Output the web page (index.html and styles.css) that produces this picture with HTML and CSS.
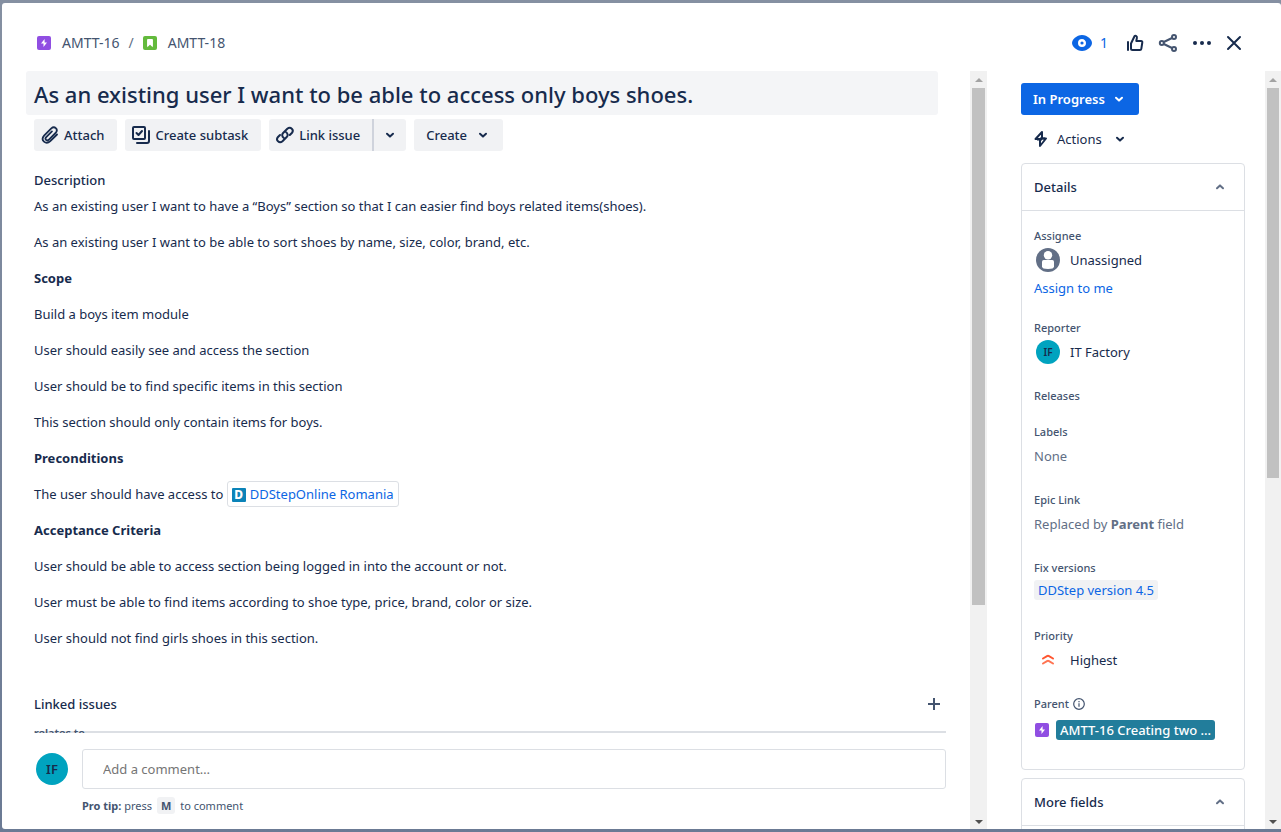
FILE: index.html
```html
<!DOCTYPE html>
<html lang="en">
<head>
<meta charset="utf-8">
<title>AMTT-18</title>
<link rel="stylesheet" href="styles.css">
</head>
<body>
<svg class="defs" aria-hidden="true">
  <symbol id="epic" viewBox="0 0 14 14"><rect width="14" height="14" rx="2" fill="#904ee2"/><path d="M7.600 3L4 7.600h2.500V11L10 6.400H7.600z" fill="#fff"/></symbol>
  <symbol id="story" viewBox="0 0 14 14"><rect width="14" height="14" rx="2" fill="#63ba3c"/><path d="M4.600 3.500h4.800v7L7 8.200l-2.400 2.300z" fill="#fff" stroke="#fff" stroke-width="1" stroke-linejoin="round"/></symbol>
  <symbol id="down" viewBox="0 0 12 12"><path d="M3 4.800L6 7.600l3-2.800" fill="none" stroke="currentColor" stroke-width="2" stroke-linecap="round" stroke-linejoin="round"/></symbol>
  <symbol id="up" viewBox="0 0 12 12"><path d="M3 7.200L6 4.400l3 2.800" fill="none" stroke="currentColor" stroke-width="2" stroke-linecap="round" stroke-linejoin="round"/></symbol>
</svg>
<div class="modal">
  <header class="top">
    <nav class="crumbs">
      <svg class="type"><use href="#epic"/></svg><a href="#epic-issue">AMTT-16</a><span class="slash">/</span><svg class="type"><use href="#story"/></svg><a href="#story-issue">AMTT-18</a>
    </nav>
    <div class="tools">
      <button class="watch" aria-label="Watchers: 1"><svg width="20" height="16" viewBox="0 0 20 16"><path d="M10 0C4.500 0 0 4.700 0 8s4.500 8 10 8 10-4.700 10-8-4.500-8-10-8z" fill="#0c66e4"/><circle cx="10" cy="8" r="2.800" fill="none" stroke="#fff" stroke-width="2.400"/></svg><span>1</span></button>
      <button aria-label="Like"><svg width="18" height="18" viewBox="0 0 18 18" fill="none" stroke="#172b4d" stroke-width="2" stroke-linejoin="round" stroke-linecap="round"><path d="M2 8v8M5 9.500L8.500 2.200Q9 1.600 10 1.900q1.200.500.900 2L10.300 7H15q1.500 0 1.300 1.500l-1 6.300Q15.100 16 14 16H6.500Q5 16 5 14.500z"/></svg></button>
      <button aria-label="Share"><svg width="20" height="20" viewBox="0 0 20 20" fill="none" stroke="#44546f" stroke-width="2"><circle cx="3.800" cy="10" r="2"/><circle cx="16" cy="4" r="2"/><circle cx="16" cy="16" r="2"/><path d="M5.800 9l8.200-4M5.800 11l8.200 4"/></svg></button>
      <button aria-label="More"><svg width="20" height="6" viewBox="0 0 20 6" fill="#172b4d"><circle cx="3" cy="3" r="2"/><circle cx="10" cy="3" r="2"/><circle cx="17" cy="3" r="2"/></svg></button>
      <button aria-label="Close"><svg width="16" height="16" viewBox="0 0 16 16" stroke="#172b4d" stroke-width="2" stroke-linecap="round"><path d="M2 2l12 12M14 2L2 14"/></svg></button>
    </div>
  </header>
  <div class="columns">
    <main class="main">
      <div class="scroll">
        <h1>As an existing user I want to be able to access only boys shoes.</h1>
        <div class="actions">
          <button class="btn"><svg width="20" height="20" viewBox="0 0 20 20" fill="none" stroke="currentColor" stroke-width="1.800" stroke-linecap="round"><path d="M17 9.500l-6.700 6.700c-4.500 4.200-10.200-1-6.200-5.600l7.200-7.200c3.200-2.800 7.300.800 4.500 4.300l-7.100 7.100c-2 1.700-4.200-.700-2.700-2.500l5.900-5.900"/></svg>Attach</button>
          <button class="btn"><svg width="20" height="20" viewBox="0 0 20 20" fill="none" stroke="currentColor" stroke-width="2" stroke-linecap="round" stroke-linejoin="round"><rect x="2" y="2" width="12" height="12" rx="1"/><path d="M5.500 8l2 2 3.500-4M18 6v10q0 2-2 2H6"/></svg>Create subtask</button>
          <div class="split"><button class="btn"><svg width="20" height="20" viewBox="0 0 20 20" fill="none" stroke="currentColor" stroke-width="2" stroke-linecap="round"><path d="M8.600 12.700c-1.700-1.300-1.800-3.400-.5-4.700l4.200-4.200c3.200-2.800 7.200 1 4.500 4.200l-2 2M11.200 7.300c1.700 1.300 1.900 3.400.5 4.700l-4.200 4.200c-3.200 2.800-7.200-1-4.500-4.200l2-2"/></svg>Link issue</button><button class="btn arrow" aria-label="More link options"><svg class="chev"><use href="#down"/></svg></button></div>
          <button class="btn wide">Create<svg class="chev"><use href="#down"/></svg></button>
        </div>
        <section class="desc">
          <h2>Description</h2>
          <p>As an existing user I want to have a “Boys” section so that I can easier find boys related items(shoes).</p>
          <p>As an existing user I want to be able to sort shoes by name, size, color, brand, etc.</p>
          <p><strong>Scope</strong></p>
          <p>Build a boys item module</p>
          <p>User should easily see and access the section</p>
          <p>User should be to find specific items in this section</p>
          <p>This section should only contain items for boys.</p>
          <p><strong>Preconditions</strong></p>
          <p>The user should have access to <a class="smart" href="#ddstep"><span class="fav">D</span>DDStepOnline Romania</a></p>
          <p><strong>Acceptance Criteria</strong></p>
          <p>User should be able to access section being logged in into the account or not.</p>
          <p>User must be able to find items according to shoe type, price, brand, color or size.</p>
          <p>User should not find girls shoes in this section.</p>
        </section>
        <section class="linked">
          <div class="linked-head"><h2>Linked issues</h2><button aria-label="Link an issue"><svg width="12" height="12" viewBox="0 0 12 12" stroke="#44546f" stroke-width="2"><path d="M6 0v12M0 6h12"/></svg></button></div>
          <h3>relates to</h3>
        </section>
      </div>
      <footer class="comment">
        <span class="avatar big">IF</span>
        <div class="comment-body">
          <input type="text" aria-label="Add a comment" placeholder="Add a comment…">
          <div class="tip"><b>Pro tip:</b> press <kbd>M</kbd> to comment</div>
        </div>
      </footer>
    </main>
    <div class="bar" aria-hidden="true"><i class="tri-up"></i><div class="track"><div class="thumb main-thumb"></div></div><i class="tri-down"></i></div>
    <aside class="side">
      <button class="status">In Progress<svg class="chev"><use href="#down"/></svg></button>
      <button class="automation"><svg width="16" height="16" viewBox="0 0 16 16" fill="none" stroke="currentColor" stroke-width="2" stroke-linejoin="round"><path d="M9 1L2.500 8H7v7l6-7.500H9z"/><path d="M4 8.500h5M7 7.500h5"/></svg><span>Actions</span><svg class="chev"><use href="#down"/></svg></button>
      <section class="card">
        <h2>Details<button aria-label="Collapse details"><svg class="chev"><use href="#up"/></svg></button></h2>
        <dl>
          <div class="field"><dt>Assignee</dt><dd><svg class="person" viewBox="0 0 24 24"><circle cx="12" cy="12" r="12" fill="#626f86"/><circle cx="12" cy="7.200" r="4.200" fill="#fff"/><path d="M6 13.700q0-1.700 1.700-1.700h8.600q1.700 0 1.700 1.700v4.800q0 2.500-6 2.500t-6-2.500z" fill="#fff"/></svg>Unassigned</dd><dd class="assign"><a href="#assign">Assign to me</a></dd></div>
          <div class="field close"><dt>Reporter</dt><dd><span class="avatar small">IF</span>IT Factory</dd></div>
          <div class="field"><dt>Releases</dt></div>
          <div class="field close"><dt>Labels</dt><dd class="muted">None</dd></div>
          <div class="field"><dt>Epic Link</dt><dd class="muted"><span>Replaced by <b>Parent</b> field</span></dd></div>
          <div class="field"><dt>Fix versions</dt><dd class="versions"><a class="version" href="#version">DDStep version 4.5</a></dd></div>
          <div class="field"><dt>Priority</dt><dd><svg class="prio" viewBox="0 0 24 24" fill="none" stroke-width="2" stroke-linecap="round" stroke-linejoin="round"><path d="M7 10.500l4-2.400q1-.600 2 0l4 2.400" stroke="#ff5630"/><path d="M7 15.500l4-2.400q1-.600 2 0l4 2.400" stroke="#ff7452"/></svg>Highest</dd></div>
          <div class="field"><dt>Parent <svg width="12" height="12" viewBox="0 0 12 12" fill="none" stroke="#44546f" stroke-width="1.200"><circle cx="6" cy="6" r="5.300"/><path d="M6 5.200v3.600M6 3v1.300"/></svg></dt><dd class="parent"><svg class="type"><use href="#epic"/></svg><a href="#parent">AMTT-16 Creating two ...</a></dd></div>
        </dl>
      </section>
      <section class="card"><h2>More fields<button aria-label="Collapse more fields"><svg class="chev"><use href="#up"/></svg></button></h2><div class="rest"></div></section>
    </aside>
    <div class="bar" aria-hidden="true"><i class="tri-up"></i><div class="track"><div class="thumb side-thumb"></div></div><i class="tri-down"></i></div>
  </div>
</div>
</body>
</html>
```
FILE: styles.css
```css
* { box-sizing: border-box; }
body {
  margin: 0;
  height: 100vh;
  padding: 3px 0 3px 2px;
  display: flex;
  background: linear-gradient(#8590a2, #6b7a94);
  font-family: "Noto Sans", "Open Sans", sans-serif;
  font-size: 13px;
  line-height: 24px;
  color: #172b4d;
}
.defs { position: absolute; width: 0; height: 0; }
h1, h2, h3, p, dl, dd { margin: 0; }
button { border: 0; padding: 0; background: none; font: inherit; color: inherit; display: flex; align-items: center; }
a { color: #0c66e4; text-decoration: none; }
svg { flex: none; }
.chev { width: 12px; height: 12px; }
.type { width: 14px; height: 14px; }
.modal { flex: 1; min-width: 0; display: flex; flex-direction: column; background: #fff; border-radius: 3px; }
.top { height: 68px; padding: 12px 39px 0 35px; display: flex; align-items: center; justify-content: space-between; font-size: 14px; }
.crumbs { display: flex; align-items: center; }
.crumbs a { color: #44546f; margin-left: 11px; }
.slash { color: #626f86; margin: 0 9px; }
.tools { display: flex; align-items: center; gap: 14px; }
.watch { color: #0c66e4; gap: 8px; margin-right: 4px; }
.columns { flex: 1; min-height: 0; display: grid; grid-template-columns: minmax(0, 1fr) 17px 278px 16px; }
.main { min-height: 0; padding: 0 24px 0 32px; display: flex; flex-direction: column; }
.scroll { position: relative; z-index: 1; flex: 1; min-height: 0; overflow: hidden; margin-left: -8px; padding-left: 8px; }
h1 { margin: 0 8px 4px -8px; padding: 7px 8px 5px; background: #f4f5f7; border-radius: 3px; font-size: 22px; line-height: 32px; font-weight: 500; }
.actions { display: flex; gap: 8px; }
.btn { height: 32px; padding: 0 13px 0 6px; gap: 4px; background: #f1f2f4; border-radius: 3px; font-weight: 500; }
.btn.wide { padding: 0 14px 0 12px; gap: 10px; }
.split { display: flex; }
.split .btn:first-child { border-radius: 3px 0 0 3px; padding-right: 12px; }
.split .arrow { border-left: 2px solid #cfd3dc; border-radius: 0 3px 3px 0; padding: 0 10px; }
h2 { font-size: 13px; line-height: 20px; font-weight: 500; }
.desc h2 { margin: 19px 0 4px; }
.desc p { margin-bottom: 12px; }
.desc strong { font-weight: 700; }
.smart { padding: 3px 4px; border: 1px solid #dcdfe4; border-radius: 3px; }
.fav { display: inline-block; vertical-align: middle; width: 14px; height: 14px; margin: -2px 4px 0 0; border-radius: 1px; background: #0b83b8; color: #fff; font-size: 12px; line-height: 14px; font-weight: 800; text-align: center; }
.linked { margin-top: 42px; }
.linked-head { display: flex; align-items: center; justify-content: space-between; height: 24px; padding-right: 6px; }
h3 { margin-top: 7px; font-size: 11px; line-height: 20px; font-weight: 600; color: #44546f; }
.comment { margin-top: -2px; padding: 16px 0 11px 2px; border-top: 2px solid #dcdfe4; display: flex; gap: 14px; }
.comment-body { flex: 1; }
.avatar { display: flex; align-items: center; justify-content: center; flex: none; border-radius: 50%; background: #00a3bf; color: #172b4d; font-weight: 600; }
.big { width: 32px; height: 32px; margin-top: 4px; }
.small { width: 24px; height: 24px; font-size: 10px; }
input { display: block; width: 100%; height: 40px; padding: 0 20px; border: 1px solid #dcdfe4; border-radius: 3px; font: inherit; }
input::placeholder { color: #757575; opacity: 1; }
.tip { margin-top: 5px; font-size: 11px; color: #44546f; }
.tip b { font-weight: 700; }
kbd { margin: 0 2px; padding: 1px 4px; border-radius: 3px; background: #f1f2f4; font: inherit; font-weight: 700; }
.bar { min-height: 0; background: #f1f1f1; padding: 7px 0 5px; display: flex; flex-direction: column; align-items: center; justify-content: space-between; }
.tri-up, .tri-down { border: 4px solid transparent; border-top: 0; border-bottom-color: #a3a3a3; }
.tri-down { border-top: 4px solid #505050; border-bottom: 0; }
.track { flex: 1; align-self: stretch; margin: 6px 2px 9px; }
.thumb { background: #c1c1c1; }
.main-thumb { height: 71.5%; }
.side-thumb { height: 54%; }
.side { min-height: 0; overflow: hidden; padding: 12px 20px 0 34px; }
.status { height: 32px; padding: 0 14px 0 12px; gap: 8px; background: #0c66e4; border-radius: 3px; color: #fff; font-weight: 600; }
.automation { height: 32px; margin: 8px 0; padding: 0 12px; gap: 8px; }
.automation .chev { margin-left: 4px; }
.card { border: 1px solid #dcdfe4; border-radius: 4px; margin-bottom: 8px; }
.card h2 { height: 47px; padding: 0 18px 0 12px; border-bottom: 1px solid #dcdfe4; display: flex; align-items: center; justify-content: space-between; }
.card h2 button { color: #626f86; }
dl { padding: 17px 12px 25px; }
.field + .field { margin-top: 24px; }
.field + .close { margin-top: 20px; }
dt { display: flex; align-items: center; gap: 4px; font-size: 11px; line-height: 16px; font-weight: 500; color: #44546f; }
dd { margin-top: 4px; min-height: 24px; display: flex; align-items: center; }
.person, .prio, .small { width: 24px; height: 24px; margin: 0 10px 0 2px; }
.muted { color: #626f86; }
.muted b { font-weight: 700; }
.versions { margin-top: 2px; padding-bottom: 2px; min-height: 26px; }
.version { padding: 0 4px; line-height: 20px; background: #f1f2f4; border-radius: 3px; }
.parent { min-height: 28px; gap: 7px; padding-left: 1px; }
.parent a { padding: 0 4px; line-height: 20px; border-radius: 3px; background: #227d9b; color: #fff; white-space: nowrap; font-weight: 500; }
.rest { height: 200px; }
```
